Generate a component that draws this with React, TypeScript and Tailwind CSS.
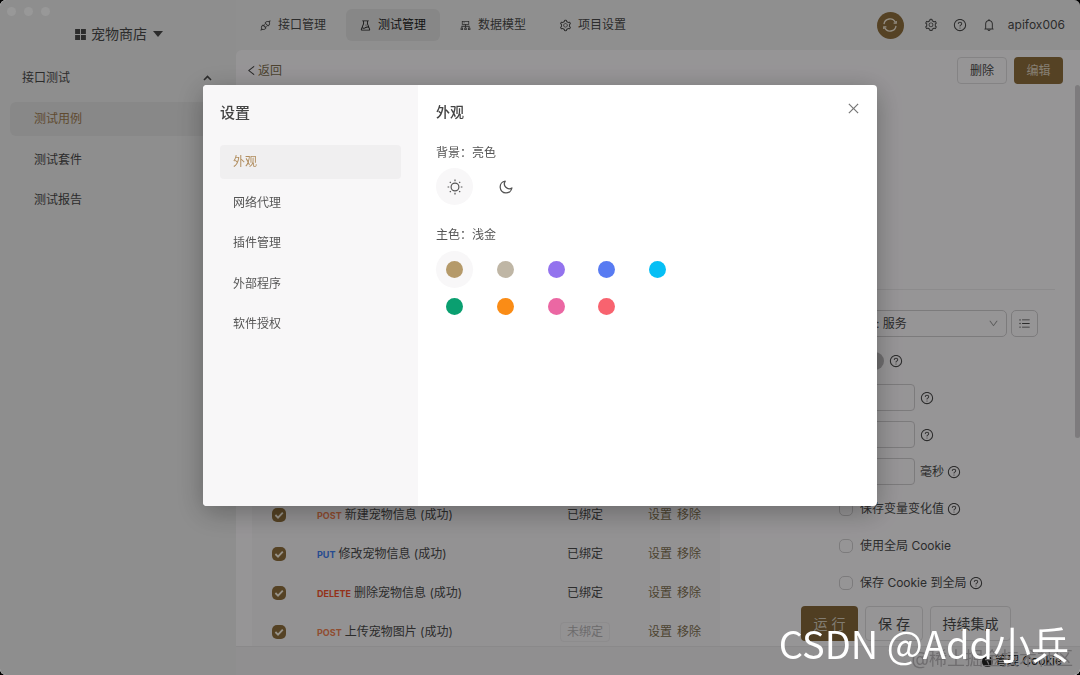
import React, { useState } from 'react';
import {
    AiFillAppstore,
    AiOutlineApi,
    AiOutlineBell,
    AiOutlineClose,
    AiOutlineCluster,
    AiOutlineDown,
    AiOutlineExperiment,
    AiOutlineLeft,
    AiOutlineQuestionCircle,
    AiOutlineSetting,
    AiOutlineUnorderedList
} from 'react-icons/ai';

interface TestStep {
    id: number;
    method: string;
    name: string;
    bound: boolean;
}

const methodColors: Record<string, string> = {
    POST: 'text-[#f08050]',
    PUT: 'text-[#3f7df0]',
    DELETE: 'text-[#f5532d]'
};

const steps: TestStep[] = [
    { id: 1, method: 'POST', name: '新建宠物信息 (成功)', bound: true },
    { id: 2, method: 'PUT', name: '修改宠物信息 (成功)', bound: true },
    { id: 3, method: 'DELETE', name: '删除宠物信息 (成功)', bound: true },
    { id: 4, method: 'POST', name: '上传宠物图片 (成功)', bound: false }
];

const tabs = [
    { label: '接口管理', icon: AiOutlineApi },
    { label: '测试管理', icon: AiOutlineExperiment },
    { label: '数据模型', icon: AiOutlineCluster },
    { label: '项目设置', icon: AiOutlineSetting }
];

const sideItems = ['测试用例', '测试套件', '测试报告'];
const settingItems = ['外观', '网络代理', '插件管理', '外部程序', '软件授权'];

const themeColors = [
    { name: '浅金', className: 'bg-[#b59a6a]' },
    { name: '暖灰', className: 'bg-[#bfb6a5]' },
    { name: '紫色', className: 'bg-[#9373ee]' },
    { name: '蓝色', className: 'bg-[#587bf2]' },
    { name: '青色', className: 'bg-[#06bff5]' },
    { name: '绿色', className: 'bg-[#0a9f70]' },
    { name: '橙色', className: 'bg-[#fa8c16]' },
    { name: '粉色', className: 'bg-[#eb67a3]' },
    { name: '红色', className: 'bg-[#f8636f]' }
];

const SyncIcon = () => (
    <svg width="16" height="16" viewBox="0 0 16 16" fill="none" stroke="currentColor" strokeWidth="1.3">
        <path d="M2 7.2a6 6 0 0 1 11.4-1.8M14 8.8a6 6 0 0 1-11.4 1.8" />
        <path d="M11.6 6.2h2.6V4M4.4 9.8H1.8V12" />
    </svg>
);

const SunIcon = () => (
    <svg width="16" height="16" viewBox="0 0 16 16" fill="none" stroke="currentColor" strokeWidth="1.2">
        <circle cx="8" cy="8" r="3.9" />
        <path d="M8 .6v1.6M8 13.8v1.6M.6 8h1.6M13.8 8h1.6M2.8 2.8l1 1M12.2 12.2l1 1M2.8 13.2l1-1M12.2 3.8l1-1" />
    </svg>
);

const MoonIcon = () => (
    <svg width="14" height="14" viewBox="0 0 14 14" fill="none" stroke="currentColor" strokeWidth="1.3" strokeLinejoin="round">
        <path d="M6.2 1.2A5.9 5.9 0 1 0 12.9 8 4.9 4.9 0 0 1 6.2 1.2z" />
    </svg>
);

const HelpIcon = () => <AiOutlineQuestionCircle size={14} className="shrink-0" />;

const Sidebar: React.FC = () => (
    <aside className="w-[236px] shrink-0 bg-[#ededed]">
        <div className="flex gap-2 pt-[7px] pl-[7px]">
            {[1, 2, 3].map((n) => (
                <span key={n} className="size-[9px] rounded-full bg-[#fdfdfd]" />
            ))}
        </div>
        <button className="mx-auto mt-2 flex h-5 items-center gap-[3px] text-sm">
            <AiFillAppstore size={15} />
            宠物商店
            <svg width="10" height="6" viewBox="0 0 10 6" className="ml-[3px]">
                <path d="M0 0h10L5 6z" fill="currentColor" />
            </svg>
        </button>
        <button className="mt-6 flex h-5 w-full items-center justify-between pr-6 pl-[22px]">
            接口测试
            <svg width="9" height="6" viewBox="0 0 9 6" fill="none" stroke="currentColor" strokeWidth="1.6">
                <path d="M1 5l3.5-3.5L8 5" />
            </svg>
        </button>
        <nav className="mt-[14px] flex h-[115px] flex-col justify-between px-[10px]">
            {sideItems.map((item, i) => (
                <a
                    key={item}
                    href="#"
                    className={`flex h-[34px] items-center rounded-md pl-6 ${i === 0 ? 'bg-[#e3e3e3] text-[#a07c50]' : ''}`}
                >
                    {item}
                </a>
            ))}
        </nav>
    </aside>
);

const Header: React.FC = () => (
    <header className="flex h-[50px] shrink-0 items-center justify-between pr-[15px] pl-[10px]">
        <nav className="flex gap-[6px]">
            {tabs.map(({ label, icon: Icon }, i) => (
                <a
                    key={label}
                    href="#"
                    className={`flex h-8 items-center gap-[6px] rounded-md pr-[14px] pl-[13px] ${i === 1 ? 'bg-[#e1e1e1] text-[#222]' : ''}`}
                >
                    <Icon size={13} />
                    {label}
                </a>
            ))}
        </nav>
        <div className="flex items-center gap-[15px]">
            <button aria-label="同步" className="mr-[5px] flex size-[27px] items-center justify-center rounded-full bg-[#8e6e3c] text-[#f4ead8]">
                <SyncIcon />
            </button>
            <button aria-label="设置"><AiOutlineSetting size={14} /></button>
            <button aria-label="帮助"><HelpIcon /></button>
            <div className="flex items-center gap-3">
                <button aria-label="通知"><AiOutlineBell size={14} /></button>
                <span>apifox006</span>
            </div>
        </div>
    </header>
);

const StepTable: React.FC = () => (
    <table className="w-full">
        <tbody>
            {steps.map((step) => (
                <tr key={step.id} className="h-[39px]">
                    <td className="w-[65px] pl-5">
                        <span className="relative block size-[14px]">
                            <input
                                type="checkbox"
                                defaultChecked
                                aria-label={step.name}
                                className="peer block size-[14px] appearance-none rounded-[5px] border border-[#cfcdcf] checked:border-0 checked:bg-[#8e6e3c]"
                            />
                            <svg
                                viewBox="0 0 14 14"
                                fill="none"
                                stroke="currentColor"
                                strokeWidth="1.8"
                                className="pointer-events-none absolute inset-0 hidden text-[#fbf3e4] peer-checked:block"
                            >
                                <path d="M3.4 7l2.6 2.6 4.8-5" />
                            </svg>
                        </span>
                    </td>
                    <td>
                        <span className={`mr-[3px] text-[9px] font-bold ${methodColors[step.method]}`}>{step.method}</span>
                        {step.name}
                    </td>
                    <td className="w-[88px]">
                        {step.bound ? (
                            <span className="pl-[7px]">已绑定</span>
                        ) : (
                            <span className="inline-block rounded-sm border border-[#ebe9eb] px-[6px] leading-[18px] text-[#b5b3b5]">未绑定</span>
                        )}
                    </td>
                    <td className="w-[72px] text-[#807050]">
                        <a href="#" className="mr-[5px]">设置</a>
                        <a href="#">移除</a>
                    </td>
                </tr>
            ))}
        </tbody>
    </table>
);

const CheckRow = ({ label, help }: { label: string; help?: boolean }) => (
    <div className="flex h-[27px] items-center gap-[3px]">
        <label className="flex items-center gap-[7px]">
            <input type="checkbox" className="size-[14px] appearance-none rounded-[5px] border border-[#cfcdcf]" />
            {label}
        </label>
        {help && <HelpIcon />}
    </div>
);

const RunPanel: React.FC = () => (
    <div className="w-[254px] shrink-0 pt-[20px]">
        <form className="flex flex-col gap-[10px] pl-[38px]">
            <div className="flex gap-1">
                <div className="relative w-[168px]">
                    <select aria-label="运行环境" className="h-[27px] w-full appearance-none rounded-[5px] border border-[#cfcdcf] pl-9">
                        <option>: 服务</option>
                    </select>
                    <AiOutlineDown size={11} className="pointer-events-none absolute top-2 right-2 text-[#999]" />
                </div>
                <button type="button" aria-label="列表" className="flex size-[27px] items-center justify-center rounded-[5px] border border-[#cfcdcf]">
                    <AiOutlineUnorderedList size={13} />
                </button>
            </div>
            <div className="flex h-[27px] items-center gap-[5px]">
                <button type="button" role="switch" aria-checked="false" aria-label="循环" className="h-[18px] w-[45px] rounded-full bg-[#b9b7b9]" />
                <HelpIcon />
            </div>
            <div className="flex items-center gap-[5px]">
                <input aria-label="循环次数" className="h-[27px] w-[76px] rounded border border-[#cfcdcf]" />
                <HelpIcon />
            </div>
            <div className="flex items-center gap-[5px]">
                <input aria-label="线程数" className="h-[27px] w-[76px] rounded border border-[#cfcdcf]" />
                <HelpIcon />
            </div>
            <div className="flex items-center gap-[3px]">
                <input id="delay" aria-label="延迟" className="mr-[2px] h-[27px] w-[76px] rounded border border-[#cfcdcf]" />
                <label htmlFor="delay">毫秒</label>
                <HelpIcon />
            </div>
            <CheckRow label="保存变量变化值" help />
            <CheckRow label="使用全局 Cookie" />
            <CheckRow label="保存 Cookie 到全局" help />
        </form>
        <div className="mt-[10px] flex gap-[7px] text-sm">
            <button className="h-[35px] w-[57px] rounded bg-[#85683a] text-[#d8cfbf]">运 行</button>
            <button className="h-[35px] w-[58px] rounded border border-[#dcdadc]">保 存</button>
            <button className="h-[35px] w-[81px] rounded border border-[#dcdadc]">持续集成</button>
        </div>
    </div>
);

const SettingsDialog: React.FC = () => {
    const [dark, setDark] = useState(false);
    const [color, setColor] = useState('浅金');

    return (
        <div className="fixed inset-0 flex items-start justify-center overflow-hidden rounded-md bg-black/40 pt-[85px]">
            <div role="dialog" aria-label="设置" className="flex h-[421px] w-[674px] overflow-hidden rounded bg-white text-[#555] shadow-[0_6px_28px_rgba(0,0,0,0.3)]">
                <div className="w-[215px] shrink-0 bg-[#f8f7f8] px-[17px] pt-4">
                    <h2 className="text-[15px] leading-6 font-medium text-[#444]">设置</h2>
                    <nav className="mt-5 flex h-[196px] flex-col justify-between">
                        {settingItems.map((item, i) => (
                            <a
                                key={item}
                                href="#"
                                className={`flex h-[34px] items-center rounded pl-[13px] ${i === 0 ? 'bg-[#f0eff0] text-[#b08c5c]' : ''}`}
                            >
                                {item}
                            </a>
                        ))}
                    </nav>
                </div>
                <div className="flex-1 px-[18px] pt-4">
                    <div className="flex items-start justify-between">
                        <h3 className="text-sm leading-[22px] font-medium text-[#444]">外观</h3>
                        <button aria-label="关闭" className="-mr-[2px] text-[#777]"><AiOutlineClose size={15} /></button>
                    </div>
                    <p className="mt-[21px] leading-[18px]">背景：{dark ? '暗色' : '亮色'}</p>
                    <div className="mt-[6px] flex gap-[14px]">
                        <button
                            aria-label="亮色"
                            onClick={() => setDark(false)}
                            className={`flex size-[37px] items-center justify-center rounded-full ${dark ? '' : 'bg-[#f8f7f8]'}`}
                        >
                            <SunIcon />
                        </button>
                        <button
                            aria-label="暗色"
                            onClick={() => setDark(true)}
                            className={`flex size-[37px] items-center justify-center rounded-full ${dark ? 'bg-[#f8f7f8]' : ''}`}
                        >
                            <MoonIcon />
                        </button>
                    </div>
                    <p className="mt-[21px] leading-[18px]">主色：{color}</p>
                    <div className="mt-[7px] grid w-[254px] grid-cols-5">
                        {themeColors.map((c) => (
                            <button
                                key={c.name}
                                aria-label={c.name}
                                onClick={() => setColor(c.name)}
                                className={`flex size-[37px] items-center justify-center rounded-full ${color === c.name ? 'bg-[#f8f7f8]' : ''}`}
                            >
                                <span className={`size-[17px] rounded-full ${c.className}`} />
                            </button>
                        ))}
                    </div>
                </div>
            </div>
        </div>
    );
};

export default function App() {
    return (
        <div className="h-screen bg-black font-['Inter','Noto_Sans_CJK_SC',sans-serif] text-xs text-[#4a4a4a]">
            <div className="flex h-full overflow-hidden rounded-md bg-[#efefef]">
                <Sidebar />
                <div className="flex min-w-0 flex-1 flex-col">
                    <Header />
                    <main className="relative flex min-h-0 flex-1 flex-col overflow-hidden rounded-tl-md bg-[#fbf9fb]">
                        <div className="flex h-[41px] shrink-0 items-center justify-between pr-[17px] pl-[9px]">
                            <a href="#" className="flex items-center text-[#807050]">
                                <AiOutlineLeft size={13} className="text-[#444]" />
                                返回
                            </a>
                            <div className="flex gap-[7px]">
                                <button className="h-[27px] w-[50px] rounded border border-[#dcdadc]">删除</button>
                                <button className="h-[27px] w-[49px] rounded bg-[#8e6e3c] text-[#e0d5c2]">编辑</button>
                            </div>
                        </div>
                        <section className="flex min-h-0 flex-1 flex-col overflow-hidden pr-[25px] pl-4">
                            <div className="h-[199px] shrink-0 border-b border-[#eae8ea]" />
                            <div className="flex gap-[81px]">
                                <div className="flex-1 bg-[#f5f3f5] pt-[205px]">
                                    <StepTable />
                                </div>
                                <RunPanel />
                            </div>
                        </section>
                        <footer className="flex h-[29px] shrink-0 items-center justify-end border-t border-[#e6e4e6] bg-[#f0eef0] pr-[18px] text-[#222]">
                            <button className="flex items-center gap-[2px]">
                                <span className="size-[11px] rounded-full bg-[#222]" />
                                管理 Cookie
                            </button>
                        </footer>
                        <div className="absolute top-[35px] right-0 h-[353px] w-[5px] rounded-full bg-[#d0ced0]" />
                    </main>
                </div>
            </div>
            <SettingsDialog />
            <div className="pointer-events-none fixed right-[7px] bottom-[6px] text-lg leading-5 text-[#6f6d6f]">@稀土掘金技术社区</div>
            <div className="pointer-events-none fixed right-[11px] bottom-2 font-['Noto_Sans_CJK_SC',sans-serif] text-[38px] leading-[48px] text-white">
                CSDN @Add小兵
            </div>
        </div>
    );
}
